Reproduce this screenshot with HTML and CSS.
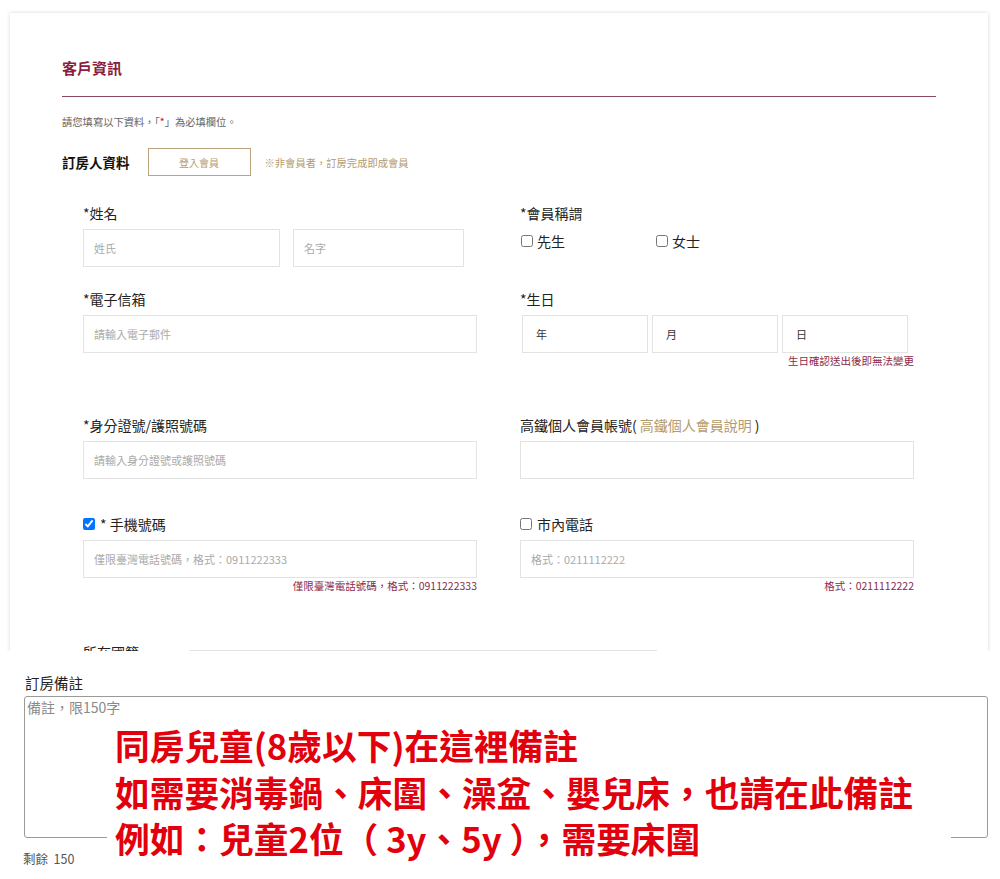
FILE: index.html
```html
<!DOCTYPE html>
<html lang="zh-Hant">
<head>
    <meta charset="UTF-8">
    <meta name="viewport" content="width=device-width, initial-scale=1.0">
    <title>客戶資訊</title>
    <link rel="stylesheet" href="styles.css">
</head>
<body>
    <div class="shot-top">
        <div class="card">
            <h2 class="card-title">客戶資訊</h2>
            <p class="required-note">請您填寫以下資料，「<span class="star">*</span>」為必填欄位。</p>

            <div class="booker">
                <span class="booker-title">訂房人資料</span>
                <button class="login-button">登入會員</button>
                <span class="login-note">※非會員者，訂房完成即成會員</span>
            </div>

            <div class="fields">
                <div class="form-row row-name">
                    <div class="field">
                        <label class="field-label">*姓名</label>
                        <div class="name-inputs">
                            <input class="text-input last-name" type="text" placeholder="姓氏">
                            <input class="text-input first-name" type="text" placeholder="名字">
                        </div>
                    </div>
                    <div class="field">
                        <label class="field-label">*會員稱謂</label>
                        <div class="options">
                            <label class="option"><input type="checkbox"> 先生</label>
                            <label class="option"><input type="checkbox"> 女士</label>
                        </div>
                    </div>
                </div>

                <div class="form-row row-email">
                    <div class="field">
                        <label class="field-label">*電子信箱</label>
                        <input class="text-input" type="text" placeholder="請輸入電子郵件">
                    </div>
                    <div class="field">
                        <label class="field-label">*生日</label>
                        <div class="birthday">
                            <select class="date-select"><option>年</option></select>
                            <select class="date-select"><option>月</option></select>
                            <select class="date-select"><option>日</option></select>
                        </div>
                        <p class="hint">生日確認送出後即無法變更</p>
                    </div>
                </div>

                <div class="form-row row-id">
                    <div class="field">
                        <label class="field-label">*身分證號/護照號碼</label>
                        <input class="text-input" type="text" placeholder="請輸入身分證號或護照號碼">
                    </div>
                    <div class="field">
                        <label class="field-label">高鐵個人會員帳號( <a class="gold-link" href="#">高鐵個人會員說明</a> )</label>
                        <input class="text-input" type="text">
                    </div>
                </div>

                <div class="form-row row-phone">
                    <div class="field">
                        <label class="field-label check-label"><input type="checkbox" checked> * 手機號碼</label>
                        <input class="text-input" type="text" placeholder="僅限臺灣電話號碼，格式：0911222333">
                        <p class="hint">僅限臺灣電話號碼，格式：0911222333</p>
                    </div>
                    <div class="field">
                        <label class="field-label check-label"><input type="checkbox"> 市內電話</label>
                        <input class="text-input" type="text" placeholder="格式：0211112222">
                        <p class="hint">格式：0211112222</p>
                    </div>
                </div>

                <div class="inline-row">
                    <label class="field-label inline-label">所在國籍</label>
                    <input class="text-input nation-input" type="text">
                </div>
            </div>
        </div>
    </div>

    <div class="shot-bottom">
        <label class="remark-label">訂房備註</label>
        <textarea class="remark" placeholder="備註，限150字"></textarea>
        <p class="counter">剩餘&nbsp;&nbsp;150</p>

        <div class="overlay-note">
            <p>同房兒童(8歲以下)在這裡備註</p>
            <p>如需要消毒鍋、床圍、澡盆、嬰兒床，也請在此備註</p>
            <p>例如：兒童2位（ 3y、5y ），需要床圍</p>
        </div>
    </div>
</body>
</html>
```

FILE: styles.css
```css
* {
    margin: 0;
    padding: 0;
    box-sizing: border-box;
}

body {
    background-color: #fff;
    color: #222;
    font-family: "Noto Sans CJK TC", "Noto Sans", sans-serif;
}

/* 上半部：客戶資訊卡片 (截圖被切在 651px) */
.shot-top {
    height: 651px;
    overflow: hidden;
    padding: 13px 12px 0 10px;
}

.card {
    background-color: #fff;
    box-shadow: 0 0 4px rgba(0, 0, 0, 0.16);
    height: 700px;
    padding: 45px 52px 0;
}

.card-title {
    font-size: 15px;
    line-height: 20px;
    font-weight: 700;
    color: #8a1d3d;
    padding-bottom: 18px;
    border-bottom: 1px solid #8a4a5c;
}

.required-note {
    font-size: 10.3px;
    line-height: 14px;
    color: #666;
    margin-top: 18px;
}

.star {
    color: #d0021b;
}

.booker {
    display: flex;
    align-items: center;
    margin-top: 19px;
    height: 28px;
}

.booker-title {
    font-size: 13.5px;
    font-weight: 700;
    color: #111;
}

.login-button {
    width: 103px;
    height: 28px;
    margin-left: 18px;
    border: 1px solid #b9a47e;
    background: #fff;
    color: #b49b6f;
    font-family: inherit;
    font-size: 10px;
    cursor: pointer;
}

.login-note {
    margin-left: 14px;
    font-size: 10.3px;
    color: #b39a6c;
}

.fields {
    padding: 0 22px 0 21px;
    margin-top: 28px;
}

.form-row {
    display: grid;
    grid-template-columns: 394px 394px;
    column-gap: 43px;
    align-items: start;
}

.row-name { margin-bottom: 23px; }
.row-email { margin-bottom: 48px; }
.row-id { margin-bottom: 36px; }
.row-phone { margin-bottom: 50px; }

.field-label {
    display: flex;
    align-items: center;
    font-size: 14px;
    line-height: 18px;
    color: #222;
}

.text-input {
    display: block;
    width: 100%;
    height: 38px;
    margin-top: 7px;
    border: 1px solid #e3e3e3;
    background: #fff;
    padding: 0 10px;
    font-family: inherit;
    font-size: 11px;
    color: #333;
    outline: none;
}

.text-input::placeholder {
    color: #aaa;
}

.name-inputs {
    display: flex;
    gap: 13px;
}

.last-name {
    width: 197px;
}

.first-name {
    width: 171px;
}

.options {
    display: flex;
    margin-top: 10px;
}

.option {
    display: flex;
    align-items: center;
    width: 134px;
    font-size: 14px;
    line-height: 18px;
    color: #222;
    margin-left: 1px;
}

input[type="checkbox"] {
    width: 12px;
    height: 12px;
    margin: 0 4px 0 0;
}

.check-label input[type="checkbox"] {
    margin-right: 5px;
}

.birthday {
    display: flex;
    gap: 4px;
    margin-left: 2px;
}

.date-select {
    appearance: none;
    -webkit-appearance: none;
    width: 126px;
    height: 38px;
    margin-top: 7px;
    border: 1px solid #e3e3e3;
    border-radius: 0;
    background: #fff;
    padding: 0 13px;
    font-family: inherit;
    font-size: 11px;
    color: #333;
}

.hint {
    text-align: right;
    font-size: 10.5px;
    line-height: 14px;
    margin-top: 1px;
    color: #8c2a4a;
}

.gold-link {
    color: #b49b6f;
    text-decoration: none;
    margin: 0 3px;
}

.inline-row {
    display: flex;
    align-items: flex-start;
}

.inline-label {
    width: 106px;
}

.nation-input {
    width: 468px;
    margin-top: 7px;
}

/* 下半部：訂房備註 */
.shot-bottom {
    position: relative;
    padding: 23px 12px 0 24px;
    height: 228px;
}

.remark-label {
    display: block;
    font-size: 14.5px;
    line-height: 18px;
    color: #222;
    margin-left: 1px;
    margin-bottom: 4px;
}

.remark {
    display: block;
    width: 964px;
    height: 142px;
    border: 1px solid #9a9a9a;
    border-radius: 3px;
    padding: 1px 2px;
    resize: none;
    font-family: inherit;
    font-size: 14px;
    line-height: 18px;
    outline: none;
}

.remark::placeholder {
    color: #8a8a8a;
}

.counter {
    font-size: 12.5px;
    line-height: 14px;
    color: #555;
    margin-top: 14px;
    margin-left: -1px;
}

/* 紅字說明蓋在輸入框上 */
.overlay-note {
    position: absolute;
    left: 107px;
    top: 71px;
    width: 844px;
    padding-left: 8px;
    background-color: #fff;
    color: #e2000c;
    font-size: 34.7px;
    font-weight: 700;
    line-height: 46.5px;
    white-space: nowrap;
}
```
